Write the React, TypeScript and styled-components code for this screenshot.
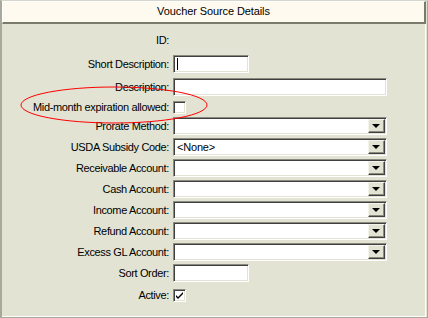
import React from 'react';
import styled, { createGlobalStyle } from 'styled-components';

const GlobalStyle = createGlobalStyle`
  html, body {
    margin: 0;
    padding: 0;
    background: #e3e3d3;
  }
  body {
    font-family: "Liberation Sans", Arial, sans-serif;
    font-size: 11px;
    color: #000;
  }
`

const Panel = styled.div`
  position: relative;
  box-sizing: border-box;
  width: 428px;
  height: 318px;
  background: #e3e3d3;
  border-left: 2px solid #a9a999;
  border-top: 1px solid #d6d6cc;
  border-right: 1px solid #a9a999;
  border-bottom: 1px solid #a9a999;
`

const Header = styled.div`
  box-sizing: border-box;
  height: 23px;
  margin-right: 1px;
  background: #fffaef;
  border-top: 1px solid #ffffff;
  border-left: 1px solid #ffffff;
  border-right: 2px solid #7b7b6b;
  border-bottom: 2px solid #7b7b6b;
  text-align: center;
  line-height: 19px;
  font-size: 11px;
  letter-spacing: -0.1px;
`

const Body = styled.div`
  box-sizing: border-box;
  height: 293px;
  margin-right: 1px;
  padding-top: 7px;
  border-right: 1px solid #ffffff;
  border-bottom: 1px solid #ffffff;
`

const Row = styled.div<{ $h: number }>`
  display: flex;
  align-items: flex-start;
  height: ${p => p.$h}px;
`

const Label = styled.div<{ $lh?: number }>`
  box-sizing: border-box;
  width: 168px;
  padding-right: 1px;
  text-align: right;
  white-space: nowrap;
  letter-spacing: -0.35px;
  line-height: ${p => p.$lh ?? 18}px;
  margin-right: 3px;
`

const Sunken = styled.div<{ $w: number }>`
  position: relative;
  box-sizing: border-box;
  width: ${p => p.$w}px;
  height: 18px;
  background: #ffffff;
  border-style: solid;
  border-width: 1px;
  border-color: #8a8a7e #ffffff #ffffff #8a8a7e;
  box-shadow: inset 1px 1px 0 #404040, inset -1px -1px 0 #e3e3d3;
  display: flex;
  align-items: center;
  padding-left: 3px;
  line-height: 14px;
  letter-spacing: -0.2px;
`

const Caret = styled.span`
  width: 1px;
  height: 12px;
  background: #000;
`

const DropButton = styled.div`
  position: absolute;
  right: 1px;
  top: 1px;
  bottom: 1px;
  width: 17px;
  box-sizing: border-box;
  background: #e3e3d3;
  border-style: solid;
  border-width: 1px;
  border-color: #f4f4ec #404040 #404040 #f4f4ec;
  box-shadow: inset -1px -1px 0 #8a8a7e;
  display: flex;
  align-items: center;
  justify-content: center;
  &::after {
    content: "";
    width: 0;
    height: 0;
    border-left: 4px solid transparent;
    border-right: 4px solid transparent;
    border-top: 4px solid #000;
    margin-right: 1px;
  }
`

const Check = styled.div`
  box-sizing: border-box;
  width: 13px;
  height: 13px;
  background: #ffffff;
  border-style: solid;
  border-width: 1px;
  border-color: #8a8a7e #ffffff #ffffff #8a8a7e;
  box-shadow: inset 1px 1px 0 #404040, inset -1px -1px 0 #e3e3d3;
  display: flex;
  align-items: center;
  justify-content: center;
`

const Circle = styled.svg`
  position: absolute;
  left: 17px;
  top: 84px;
  overflow: visible;
  pointer-events: none;
`

function Select({ value }: { value?: string }) {
  return (
    <Sunken $w={214}>
      {value}
      <DropButton />
    </Sunken>
  )
}

const selects = [
  'Prorate Method:',
  'USDA Subsidy Code:',
  'Receivable Account:',
  'Cash Account:',
  'Income Account:',
  'Refund Account:',
  'Excess GL Account:',
]

export default function App() {
  return (
    <Panel>
      <GlobalStyle />
      <Header>Voucher Source Details</Header>
      <Body>
        <Row $h={24}>
          <Label>ID:</Label>
        </Row>
        <Row $h={23}>
          <Label>Short Description:</Label>
          <Sunken $w={76}><Caret /></Sunken>
        </Row>
        <Row $h={23}>
          <Label>Description:</Label>
          <Sunken $w={214} />
        </Row>
        <Row $h={16}>
          <Label $lh={13}>Mid-month expiration allowed:</Label>
          <Check />
        </Row>
        {selects.map(s => (
          <Row $h={21} key={s}>
            <Label>{s}</Label>
            <Select value={s === 'USDA Subsidy Code:' ? '<None>' : undefined} />
          </Row>
        ))}
        <Row $h={25}>
          <Label>Sort Order:</Label>
          <Sunken $w={76} />
        </Row>
        <Row $h={16}>
          <Label $lh={13}>Active:</Label>
          <Check>
            <svg width="9" height="9" viewBox="0 0 9 9">
              <path d="M1 4 L3 6 L8 1 L8 3 L3 8 L1 6 Z" fill="#000" />
            </svg>
          </Check>
        </Row>
      </Body>
      <Circle width="190" height="40">
        <ellipse cx="95" cy="20" rx="93" ry="18" fill="none" stroke="#ff0000" strokeWidth="1" />
      </Circle>
    </Panel>
  );
}
